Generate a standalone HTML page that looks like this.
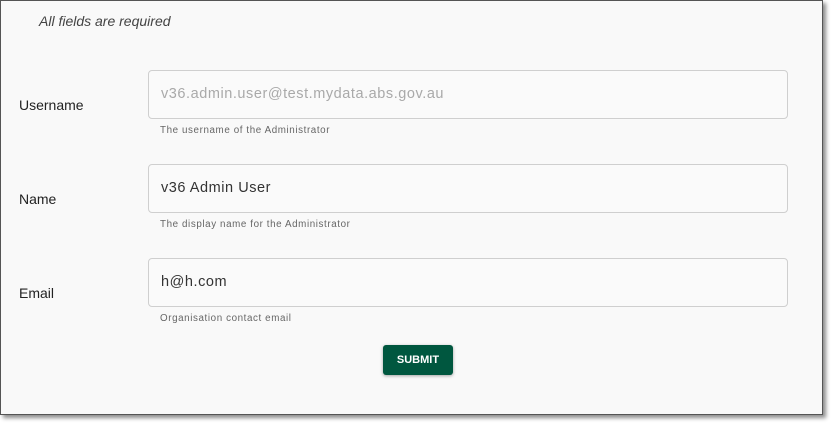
<!DOCTYPE html>
<html><head><style>
body{margin:0;width:832px;height:424px;background:#fff;font-family:"Liberation Sans",Arial,sans-serif;position:relative;overflow:hidden}
.frame{position:absolute;left:0;top:0;width:821px;height:413px;border:1px solid #555;background:#f9f9f9;box-shadow:3px 3px 4px rgba(0,0,0,.45)}
.t{position:absolute;font-size:14px;color:#222}
.in{position:absolute;left:148px;width:638px;height:47px;border:1px solid #cfcfcf;border-radius:4px;background:#fafafa;box-sizing:content-box}
.in span{position:absolute;left:12px;top:15px;font-size:14.5px;color:#333;letter-spacing:.55px}
.h{position:absolute;left:160px;font-size:9.8px;color:#666;letter-spacing:.6px;top:0}
.btn{position:absolute;left:383px;top:345px;width:70px;height:30px;background:#00573f;border-radius:3px;color:#fff;font-weight:bold;font-size:11px;text-align:center;line-height:30px;box-shadow:0 1px 3px rgba(0,0,0,.35)}
</style></head><body>
<div class="frame"></div>
<div class="t" style="left:39px;top:13px;font-style:italic;color:#444">All fields are required</div>
<div class="t" style="left:19px;top:97px">Username</div>
<div class="in" style="top:70px"><span style="color:#a9a9a9">v36.admin.user@test.mydata.abs.gov.au</span></div>
<div class="h" style="top:125px">The username of the Administrator</div>
<div class="t" style="left:19px;top:191px">Name</div>
<div class="in" style="top:164px"><span>v36 Admin User</span></div>
<div class="h" style="top:219px">The display name for the Administrator</div>
<div class="t" style="left:19px;top:285px">Email</div>
<div class="in" style="top:258px"><span>h@h.com</span></div>
<div class="h" style="top:313px">Organisation contact email</div>
<div class="btn">SUBMIT</div>
</body></html>
